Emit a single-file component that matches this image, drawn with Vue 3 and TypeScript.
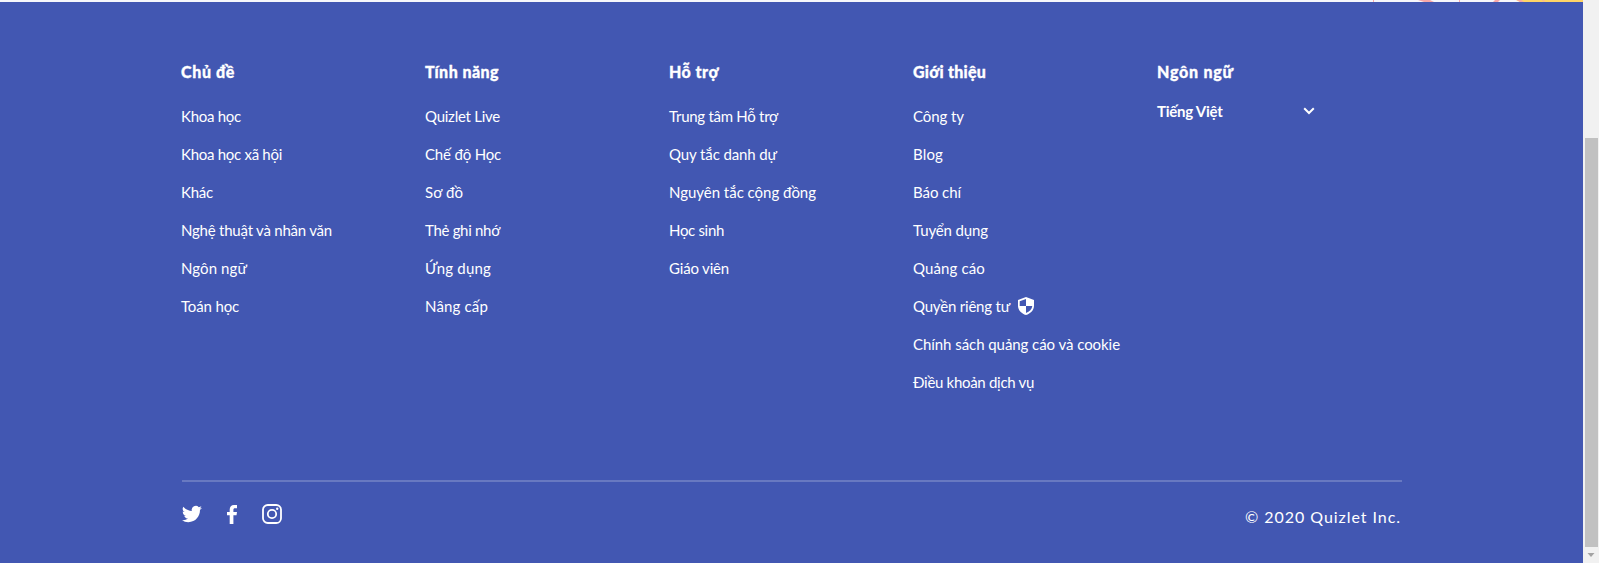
<script setup lang="ts">
interface FooterLink {
  label: string
  width: number
  shield?: boolean
}
interface FooterColumn {
  title: string
  width: number
  links: FooterLink[]
}

const columns: FooterColumn[] = [
  {
    title: 'Chủ đề',
    width: 54,
    links: [
      { label: 'Khoa học', width: 60 },
      { label: 'Khoa học xã hội', width: 101 },
      { label: 'Khác', width: 32 },
      { label: 'Nghệ thuật và nhân văn', width: 151 },
      { label: 'Ngôn ngữ', width: 66 },
      { label: 'Toán học', width: 58 },
    ],
  },
  {
    title: 'Tính năng',
    width: 74,
    links: [
      { label: 'Quizlet Live', width: 75 },
      { label: 'Chế độ Học', width: 76 },
      { label: 'Sơ đồ', width: 38 },
      { label: 'Thẻ ghi nhớ', width: 75 },
      { label: 'Ứng dụng', width: 66 },
      { label: 'Nâng cấp', width: 63 },
    ],
  },
  {
    title: 'Hỗ trợ',
    width: 50,
    links: [
      { label: 'Trung tâm Hỗ trợ', width: 109 },
      { label: 'Quy tắc danh dự', width: 108 },
      { label: 'Nguyên tắc cộng đồng', width: 147 },
      { label: 'Học sinh', width: 55 },
      { label: 'Giáo viên', width: 60 },
    ],
  },
  {
    title: 'Giới thiệu',
    width: 73,
    links: [
      { label: 'Công ty', width: 51 },
      { label: 'Blog', width: 30 },
      { label: 'Báo chí', width: 48 },
      { label: 'Tuyển dụng', width: 75 },
      { label: 'Quảng cáo', width: 72 },
      { label: 'Quyền riêng tư', width: 97, shield: true },
      { label: 'Chính sách quảng cáo và cookie', width: 207 },
      { label: 'Điều khoản dịch vụ', width: 121 },
    ],
  },
]

// Tracks a label so that it spans the given number of pixels.
const vSpan = {
  mounted(el: HTMLElement, binding: { value: number }) {
    const natural = el.getBoundingClientRect().width
    const count = Array.from((el.textContent ?? '').trim()).length
    el.style.letterSpacing = `${(binding.value - natural) / count}px`
  },
}
</script>

<template>
  <div class="page">
    <main class="view">
      <div class="strip">
        <svg width="243" height="2" viewBox="0 0 243 2">
          <path d="M176 0h67v2h-63z" fill="#ffd467" />
          <path d="M78 0h12l4 2h-10zM155 0h5l-2 2h-5zM33 0h1v2h-1zM119 0h1v2h-1zM177 0h4l3 2h-4zM202 0h1l2 2h-1z" fill="#f7a8a8" />
        </svg>
      </div>
      <footer class="footer">
        <div class="columns">
          <section v-for="column in columns" :key="column.title" class="column">
            <h2 class="title"><span v-span="column.width">{{ column.title }}</span></h2>
            <ul class="links">
              <li v-for="link in column.links" :key="link.label" class="link">
                <span v-span="link.width">{{ link.label }}</span>
                <svg v-if="link.shield" class="shield" width="16" height="18" viewBox="0 0 16 18">
                  <path fill="#fff" fill-rule="evenodd" d="M8 0l8 3v5.700c0 4.200-3.300 7.900-8 9.300-4.700-1.400-8-5.100-8-9.300V3zM8 2v7h6.300c-.3 3.100-2.800 5.800-6.300 7V9H1.700V4.300z" />
                </svg>
              </li>
            </ul>
          </section>
          <section class="column">
            <h2 class="title"><span v-span="77">Ngôn ngữ</span></h2>
            <div class="language">
              <span v-span="65.5">Tiếng Việt</span>
              <svg width="12" height="8" viewBox="0 0 12 8">
                <path d="M1.200 1.300L6 6l4.800-4.700" fill="none" stroke="#fff" stroke-width="2" />
              </svg>
            </div>
          </section>
        </div>
        <div class="bottom">
          <div class="social">
            <svg class="twitter" width="20" height="20" viewBox="0 0 24 24">
              <path fill="#fff" d="M23.950 4.570a10 10 0 0 1-2.820.77 4.960 4.960 0 0 0 2.160-2.720c-.95.550-2.010.960-3.130 1.180a4.920 4.920 0 0 0-8.380 4.480C7.690 8.100 4.070 6.130 1.640 3.160a4.900 4.900 0 0 0 1.520 6.570 4.900 4.900 0 0 1-2.230-.61v.060a4.920 4.920 0 0 0 3.950 4.830 5 5 0 0 1-2.210.080 4.940 4.940 0 0 0 4.600 3.420A9.870 9.870 0 0 1 0 19.540a14 14 0 0 0 7.550 2.210c9.050 0 14-7.500 14-13.980 0-.21 0-.42-.02-.63a9.940 9.940 0 0 0 2.420-2.570z" />
            </svg>
            <svg class="facebook" width="10" height="19" viewBox="0 0 10 19">
              <path fill="#fff" d="M2.700 19v-8.700H0V7h2.700V4.600C2.700 1.700 4.300 0 7 0h3v3.300H8C6.800 3.300 6.400 3.900 6.400 4.900V7H10l-.5 3.300H6.400V19z" />
            </svg>
            <svg class="instagram" width="20" height="20" viewBox="0 0 20 20" fill="none" stroke="#fff">
              <rect x="1" y="1" width="18" height="18" rx="4.800" stroke-width="1.800" />
              <circle cx="10" cy="10" r="4.200" stroke-width="1.800" />
              <circle cx="15.200" cy="4.800" r="1.200" fill="#fff" stroke="none" />
            </svg>
          </div>
          <div class="copyright"><span v-span="156">© 2020 Quizlet Inc.</span></div>
        </div>
      </footer>
    </main>
    <div class="scrollbar">
      <div class="thumb"></div>
      <svg class="arrow" width="16" height="16" viewBox="0 0 16 16">
        <path d="M4.500 6h7L8 10z" fill="#a3a3a3" />
      </svg>
    </div>
  </div>
</template>

<style>
body {
  margin: 0;
  overflow: hidden;
}
</style>

<style scoped>
.page {
  display: flex;
  height: 563px;
  font-family: Lato, "Noto Sans", sans-serif;
  font-size: 15px;
  color: #fff;
  font-kerning: normal;
}
.view {
  width: 1583px;
}
.strip {
  display: flex;
  height: 2px;
  padding-left: 1340px;
  background: #f6f7fb;
}
.footer {
  box-sizing: border-box;
  height: 561px;
  padding: 58px 181px 0 182px;
  background: #4257b2;
}
.columns {
  display: grid;
  grid-template-columns: repeat(5, 244px);
  height: 420px;
  margin-left: -1px;
}
.title {
  margin: 0 0 24px;
  font-family: "Lato Black", Lato, "Noto Sans", sans-serif;
  font-size: 16px;
  line-height: 24px;
  font-weight: 900;
  -webkit-text-stroke: 0.3px #fff;
}
.title span,
.link span,
.language span,
.copyright span {
  display: inline-block;
  white-space: nowrap;
}
.links {
  margin: 0;
  padding: 0;
  list-style: none;
}
.link {
  display: flex;
  align-items: center;
  height: 16px;
  margin-bottom: 22px;
  line-height: 16px;
}
.shield {
  margin-left: 8px;
}
.language {
  display: flex;
  align-items: center;
  justify-content: space-between;
  width: 158px;
  height: 20px;
  margin-top: -7px;
  line-height: 20px;
  font-weight: 700;
}
.bottom {
  display: flex;
  justify-content: space-between;
  height: 60px;
  border-top: 2px solid #6879c1;
}
.social {
  display: flex;
  align-items: center;
  height: 20px;
  margin-top: 22px;
}
.facebook {
  margin-left: 25px;
}
.instagram {
  margin-left: 25px;
}
.copyright {
  margin: 25px 1px 0 0;
  font-size: 16px;
  line-height: 20px;
}
.scrollbar {
  display: flex;
  flex-direction: column;
  width: 16px;
  background: #f1f1f1;
}
.thumb {
  width: 13px;
  height: 409px;
  margin: 138px 0 0 2px;
  background: #c1c1c1;
}
</style>
